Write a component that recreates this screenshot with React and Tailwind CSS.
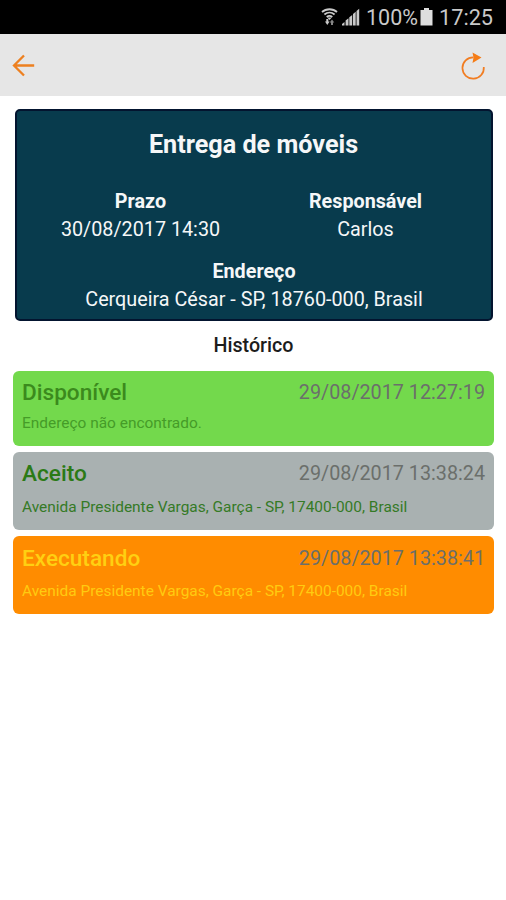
const history = [
  {
    status: "Disponível",
    time: "29/08/2017 12:27:19",
    address: "Endereço não encontrado.",
    card: "h-[75px] bg-[#73d94c]",
    body: "pt-[6px]",
    title: "text-[#3b8a1d]",
    text: "mt-[2px] text-[#459c28]",
  },
  {
    status: "Aceito",
    time: "29/08/2017 13:38:24",
    address: "Avenida Presidente Vargas, Garça - SP, 17400-000, Brasil",
    card: "h-[78px] bg-[#a9b1b1]",
    body: "pt-[6px]",
    title: "text-[#2b7a16]",
    text: "mt-[5px] text-[#357a26]",
  },
  {
    status: "Executando",
    time: "29/08/2017 13:38:41",
    address: "Avenida Presidente Vargas, Garça - SP, 17400-000, Brasil",
    card: "h-[78px] bg-[#ff8c00]",
    body: "pt-[7px]",
    title: "text-[#ffd012]",
    text: "mt-[4px] text-[#ffcb10]",
  },
];

function StatusBar() {
  return (
    <div className="flex h-[34px] items-center justify-end bg-black pr-[13px] text-[#c9c9c9]">
      <svg width="17" height="20" viewBox="0 0 17 20" fill="none" stroke="currentColor" strokeWidth="1.800">
        <path d="M1 5C5 1.300 12 1.300 16 5M3.400 7.500c3-2.600 7.200-2.600 10.200 0M5.700 10c1.700-1.400 3.900-1.400 5.600 0" />
        <path d="M6.200 10.500h4.600L8.500 13z" fill="currentColor" stroke="none" />
        <path d="M4 14.500h1.300V12h2v2.500h1.300L6.300 18z" fill="#c9c9c9" stroke="none" />
        <path d="M8.700 15.500 11 12.500l2.300 3H12V18h-2v-2.500z" fill="#858585" stroke="none" />
      </svg>
      <svg className="ml-[4px]" width="18" height="18" viewBox="0 0 18 18" fill="currentColor">
        <path d="M0 17.500v-1.500l2.500-2v3.500zM3.600 17.500v-5l2.900-2.300v7.300zM7.300 17.500V9.200L10.200 7v10.500zM11 17.500V6l2.700-2.200v13.700zM14.500 17.500V3l2.700-2.300v16.800z" />
      </svg>
      <span className="mt-[2px] ml-[6px] w-[51px] text-[21.500px] leading-[32px] whitespace-nowrap">100%</span>
      <svg className="ml-[3px]" width="13" height="18" viewBox="0 0 13 18" fill="#dedede">
        <path d="M4 0h5v2h3.500v15.500H.5V2H4z" />
      </svg>
      <span className="mt-[2px] ml-[6px] w-[54px] text-[21.700px] leading-[32px] whitespace-nowrap">17:25</span>
    </div>
  );
}

function Toolbar() {
  return (
    <div className="flex h-[62px] items-center justify-between bg-[#e6e6e6] pr-[20px] pl-[11px]">
      <svg width="24" height="23" viewBox="0 0 24 23" fill="none" stroke="#ed8020" strokeWidth="2.300">
        <path d="M23.200 11.500H3M13 1.500l-10 10 10 10" />
      </svg>
      <svg className="mt-[2px]" width="26" height="28" viewBox="0 0 26 28" fill="none">
        <path d="M23.800 15A10.700 10.700 0 1 1 13.500 5.300" stroke="#f17d22" strokeWidth="1.700" />
        <path d="M12.500 .500 21.500 5.500 12.500 11 13.500 5.500z" fill="#f57c16" />
      </svg>
    </div>
  );
}

function Detail({ label, value }) {
  return (
    <div className="flex flex-1 flex-col items-center text-[19.750px] leading-[28px] whitespace-nowrap">
      <span className="font-bold">{label}</span>
      <span>{value}</span>
    </div>
  );
}

export default function App() {
  return (
    <div className="min-h-[900px] w-[506px] bg-white font-[Roboto,sans-serif]">
      <StatusBar />
      <Toolbar />
      <main className="pt-[13px] pr-[12px] pl-[13px]">
        <section className="mr-[1px] ml-[2px] h-[212px] rounded-[5px] border-2 border-[#03142f] bg-[#083b4d] text-[#f5f7f8]">
          <h1 className="pt-[17px] pr-[1px] text-center text-[25.200px] leading-[34px] font-bold">Entrega de móveis</h1>
          <div className="mt-[26px] flex pr-[13px] pl-[11px]">
            <Detail label="Prazo" value="30/08/2017 14:30" />
            <Detail label="Responsável" value="Carlos" />
          </div>
          <div className="mt-[14px] flex">
            <Detail label="Endereço" value="Cerqueira César - SP, 18760-000, Brasil" />
          </div>
        </section>
        <h2 className="h-[50px] pt-[11px] text-center text-[19.700px] leading-[28px] font-medium text-[#1c1c1c]">Histórico</h2>
        <div className="flex flex-col gap-[6px]">
          {history.map((item) => (
            <article key={item.status} className={`rounded-[6px] px-[9px] ${item.card}`}>
              <div className={`flex items-center justify-between leading-[32px] ${item.body}`}>
                <span className={`text-[22.600px] font-medium ${item.title}`}>{item.status}</span>
                <span className="text-[19.750px] text-[#6b6f6b]">{item.time}</span>
              </div>
              <p className={`text-[15.450px] leading-[24px] whitespace-nowrap ${item.text}`}>{item.address}</p>
            </article>
          ))}
        </div>
      </main>
    </div>
  );
}
